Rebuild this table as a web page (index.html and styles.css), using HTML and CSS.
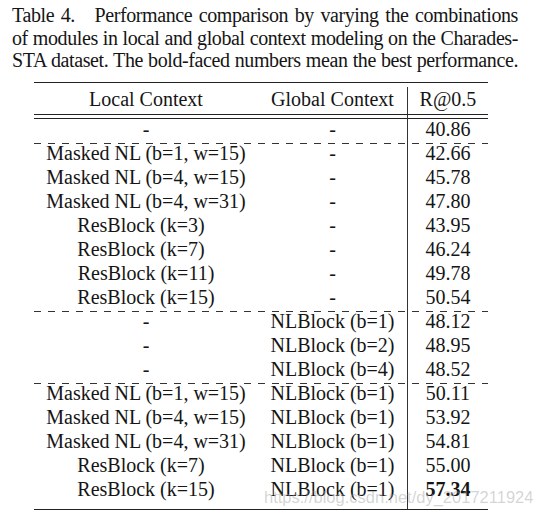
FILE: index.html
```html
<html>
	<head>
		<meta charset="utf-8">
		<title>Table 4</title>
		<link rel="stylesheet" href="styles.css">
	</head>
	<body>
		<p class="caption">
			<span class="line"><span class="label">Table 4.</span> Performance comparison by varying the combinations</span>
			<span class="line">of modules in local and global context modeling on the Charades-</span>
			<span class="line">STA dataset. The bold-faced numbers mean the best performance.</span>
		</p>
		<div class="results">
			<div class="row head">
				<div>Local Context</div>
				<div>Global Context</div>
				<div class="score">R@0.5</div>
			</div>
			<div class="row first">
				<div>-</div>
				<div>-</div>
				<div class="score">40.86</div>
			</div>
			<div class="row dashed">
				<div>Masked NL (b=1, w=15)</div>
				<div>-</div>
				<div class="score">42.66</div>
			</div>
			<div class="row">
				<div>Masked NL (b=4, w=15)</div>
				<div>-</div>
				<div class="score">45.78</div>
			</div>
			<div class="row">
				<div>Masked NL (b=4, w=31)</div>
				<div>-</div>
				<div class="score">47.80</div>
			</div>
			<div class="row">
				<div class="pad">ResBlock (k=3)</div>
				<div>-</div>
				<div class="score">43.95</div>
			</div>
			<div class="row">
				<div class="pad">ResBlock (k=7)</div>
				<div>-</div>
				<div class="score">46.24</div>
			</div>
			<div class="row">
				<div>ResBlock (k=11)</div>
				<div>-</div>
				<div class="score">49.78</div>
			</div>
			<div class="row">
				<div>ResBlock (k=15)</div>
				<div>-</div>
				<div class="score">50.54</div>
			</div>
			<div class="row dashed">
				<div>-</div>
				<div>NLBlock (b=1)</div>
				<div class="score">48.12</div>
			</div>
			<div class="row">
				<div>-</div>
				<div>NLBlock (b=2)</div>
				<div class="score">48.95</div>
			</div>
			<div class="row">
				<div>-</div>
				<div>NLBlock (b=4)</div>
				<div class="score">48.52</div>
			</div>
			<div class="row dashed">
				<div>Masked NL (b=1, w=15)</div>
				<div>NLBlock (b=1)</div>
				<div class="score">50.11</div>
			</div>
			<div class="row">
				<div>Masked NL (b=4, w=15)</div>
				<div>NLBlock (b=1)</div>
				<div class="score">53.92</div>
			</div>
			<div class="row">
				<div>Masked NL (b=4, w=31)</div>
				<div>NLBlock (b=1)</div>
				<div class="score">54.81</div>
			</div>
			<div class="row">
				<div class="pad">ResBlock (k=7)</div>
				<div>NLBlock (b=1)</div>
				<div class="score">55.00</div>
			</div>
			<div class="row last">
				<div>ResBlock (k=15)</div>
				<div>NLBlock (b=1)</div>
				<div class="score best">57.34</div>
			</div>
		</div>
		<div class="watermark">https://blog.csdn.net/dy_2017211924</div>
	</body>
</html>
```

FILE: styles.css
```css
body {
	margin: 0;
	background-color: white;
	color: #151515;
	font-family: "Liberation Serif", "Times New Roman", serif;
	position: relative;
	width: 541px;
	height: 518px;
	overflow: hidden;
}

.caption {
	margin: 0;
	padding: 4px 0 0 12px;
	width: 506px;
	font-size: 20px;
	line-height: 22.5px;
	letter-spacing: -0.4px;
}

.caption .line {
	display: block;
	white-space: nowrap;
	text-align: justify;
	text-align-last: justify;
}

.caption .label {
	margin-right: 13px;
}

.results {
	margin: 10.5px 0 0 34px;
	width: 454px;
	border-top: 1px solid #222;
	border-bottom: 1px solid #222;
	font-size: 20px;
	line-height: 24px;
}

.row {
	display: grid;
	grid-template-columns: 224px 149px 81px;
	text-align: center;
	white-space: nowrap;
}

.row > div {
	box-sizing: border-box;
}

.row .score {
	border-left: 1px solid #333;
}

.row .pad {
	padding-right: 10px;
}

.row .best {
	font-weight: bold;
}

.head {
	padding-top: 4px;
	border-bottom: 1px solid #222;
}

.head > div {
	padding-bottom: 3px;
}

.first > div {
	padding-top: 2px;
}

.first {
	background: linear-gradient(#222, #222) 0 3px / 100% 1px no-repeat;
}

.dashed {
	background: repeating-linear-gradient(to right, #333 0 7px, transparent 7px 14px) 0 2px / 100% 1px no-repeat;
}

.last > div {
	padding-bottom: 8px;
}

.watermark {
	position: absolute;
	left: 264px;
	top: 489px;
	font-family: "Liberation Sans", Arial, sans-serif;
	font-size: 16.5px;
	line-height: 1;
	color: rgba(160, 160, 160, 0.45);
	white-space: nowrap;
}
```
